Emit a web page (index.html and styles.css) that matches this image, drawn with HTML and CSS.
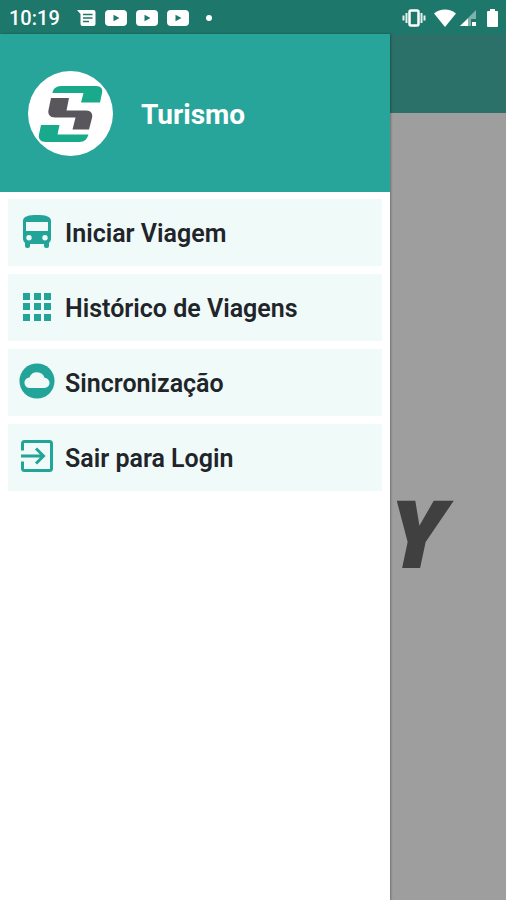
FILE: index.html
```html
<!DOCTYPE html>
<html lang="pt-BR">
<head>
<meta charset="utf-8">
<meta name="viewport" content="width=device-width, initial-scale=1">
<title>Turismo</title>
<link rel="stylesheet" href="styles.css">
</head>
<body>
<header class="status">
  <div class="status-left">
    <time>10:19</time>
    <svg class="note" width="19" height="16" viewBox="0 0 19 16"><path fill="#fff" d="M0 0h16.500a2 2 0 0 1 2 2v12a2 2 0 0 1-2 2h-11a2 2 0 0 1-2-2V4z"/><path stroke="#1d776b" stroke-width="1.500" d="M6 4.500h9.500M6 8h9.500M6 11.500h6"/></svg>
    <svg width="22" height="16" viewBox="0 0 22 16"><rect width="22" height="16" rx="4" fill="#fff"/><path fill="#1d776b" d="M8.500 4.800v6.400l6-3.200z"/></svg>
    <svg width="22" height="16" viewBox="0 0 22 16"><rect width="22" height="16" rx="4" fill="#fff"/><path fill="#1d776b" d="M8.500 4.800v6.400l6-3.200z"/></svg>
    <svg width="22" height="16" viewBox="0 0 22 16"><rect width="22" height="16" rx="4" fill="#fff"/><path fill="#1d776b" d="M8.500 4.800v6.400l6-3.200z"/></svg>
    <span class="dot"></span>
  </div>
  <div class="status-right">
    <svg width="24" height="18" viewBox="0 0 24 18"><rect x="7.500" y="1.500" width="9" height="15" rx="1.500" fill="none" stroke="#fff" stroke-width="2.500"/><path stroke="#e3f1ef" stroke-width="2" d="M4.500 4v10M19.500 4v10M1.500 6.500v5M22.500 6.500v5"/></svg>
    <svg class="wifi" width="22" height="18" viewBox="0 0 22 18"><path fill="#fff" d="M0 4.500C6-1 16-1 22 4.500L11 18z"/></svg>
    <svg width="17" height="18" viewBox="0 0 17 18"><path fill="#7fb2ab" d="M16 1v9h-5v7H0z"/><path fill="#fff" d="M8 9.500V17H0z"/><path fill="#fff" d="M12 13h4v4h-4z"/></svg>
    <svg class="battery" width="11" height="18" viewBox="0 0 11 18"><path fill="#fff" d="M3 0h5v2h2a1 1 0 0 1 1 1v14a1 1 0 0 1-1 1H1a1 1 0 0 1-1-1V3a1 1 0 0 1 1-1h2z"/></svg>
  </div>
</header>
<div class="app">
  <main class="page">
    <div class="appbar"></div>
    <div class="brand">Y</div>
  </main>
  <aside class="drawer">
    <div class="profile">
      <svg class="logo" width="85" height="85" viewBox="0 0 85 85">
        <circle cx="42.500" cy="42.500" r="42.500" fill="#fff"/>
        <path fill="#19a98b" d="M24.500 22C25 18 28 15 33 15H68C73 15 75 18 74 22L72 31.500H53L55.500 22Z"/>
        <path fill="#59575b" d="M23 27H41L38.500 39.500H58C63 39.500 65 43 64 47L61 58.500H44.500L47.500 46.500H27C22 46.500 19.500 43 20.500 39Z"/>
        <path fill="#19a98b" d="M13 54H31.500L29.500 63.500H60.500C59 68 57 71 51 71H18C12.500 71 10 67.500 11 63.500Z"/>
      </svg>
      <h1>Turismo</h1>
    </div>
    <nav class="menu">
      <a href="#iniciar">
        <svg width="38" height="38" viewBox="0 0 38 38"><path fill="currentColor" fill-rule="evenodd" d="M5 9C5 4 11 3 19 3s14 1 14 6v18q0 2-2 4v3q0 2-2 2h-1q-2 0-2-2v-2H12v2q0 2-2 2H9q-2 0-2-2v-3q-2-2-2-4zM8 10v9h22v-9zM11 23a2.700 2.700 0 1 0 0 5.400 2.700 2.700 0 0 0 0-5.400zM27 23a2.700 2.700 0 1 0 0 5.400 2.700 2.700 0 0 0 0-5.400z"/></svg>
        <span>Iniciar Viagem</span>
      </a>
      <a href="#historico">
        <svg width="38" height="38" viewBox="0 0 38 38"><path fill="currentColor" d="M5 6h7v7H5zM16 6h7v7h-7zM26 6h7v7h-7zM5 16h7v7H5zM16 16h7v7h-7zM26 16h7v7h-7zM5 27h7v7H5zM16 27h7v7h-7zM26 27h7v7h-7z"/></svg>
        <span>Histórico de Viagens</span>
      </a>
      <a href="#sincronizacao">
        <svg width="38" height="38" viewBox="0 0 26 26"><circle cx="13" cy="13" r="12" fill="currentColor"/><path fill="#f0faf9" d="M18 17.800H8.200a3.600 3.600 0 0 1-.4-7.200 5.500 5.500 0 0 1 10.400.2 3.500 3.500 0 0 1-.2 7z"/></svg>
        <span>Sincronização</span>
      </a>
      <a href="#sair">
        <svg width="38" height="38" viewBox="0 0 38 38"><path fill="none" stroke="currentColor" stroke-width="3" d="M4.500 13.500V6.500a2 2 0 0 1 2-2h25a2 2 0 0 1 2 2v25a2 2 0 0 1-2 2h-25a2 2 0 0 1-2-2v-7M3 19h22M18 11.500l7.500 7.500-7.500 7.500"/></svg>
        <span>Sair para Login</span>
      </a>
    </nav>
  </aside>
</div>
</body>
</html>
```
FILE: styles.css
```css
* {
  box-sizing: border-box;
}

body {
  margin: 0;
  min-height: 100vh;
  display: flex;
  flex-direction: column;
  font-family: Roboto, "Liberation Sans", sans-serif;
  background: #9e9e9e;
}

svg {
  display: block;
  flex: none;
}

.status {
  height: 34px;
  padding: 2px 8px 0 9px;
  display: flex;
  align-items: center;
  justify-content: space-between;
  background: #1d776b;
  color: #fff;
}

.status-left,
.status-right {
  display: flex;
  align-items: center;
  gap: 9px;
}

.status time {
  margin-right: 8px;
  font-size: 20px;
  font-weight: 500;
  line-height: 24px;
}

.dot {
  width: 6px;
  height: 6px;
  margin-left: 8px;
  border-radius: 50%;
  background: #fff;
}

.status-right {
  gap: 4px;
}

.wifi {
  margin-left: 4px;
}

.battery {
  margin-left: 6px;
}

.app {
  position: relative;
  flex: 1;
  display: flex;
}

.page {
  flex: 1;
  display: flex;
  flex-direction: column;
}

.appbar {
  height: 79px;
  background: #2c7169;
}

.brand {
  flex: 1;
  display: flex;
  align-items: center;
  justify-content: flex-end;
  padding: 50px 60px 0 0;
  color: #404040;
  font-family: "Open Sans", Roboto, sans-serif;
  font-size: 94px;
  font-style: italic;
  font-weight: 800;
  line-height: 96px;
}

.drawer {
  position: absolute;
  top: 0;
  bottom: 0;
  left: 0;
  width: 390px;
  max-width: 85%;
  background: #fff;
  box-shadow: 1px 0 2px rgba(0, 0, 0, 0.3);
}

.profile {
  height: 158px;
  padding: 0 28px;
  display: flex;
  align-items: center;
  gap: 28px;
  background: #27a59a;
  color: #fff;
}

.profile h1 {
  margin: 0;
  padding-top: 3px;
  font-size: 28px;
  font-weight: 700;
  line-height: 32px;
}

.menu {
  display: flex;
  flex-direction: column;
  gap: 8px;
  padding: 7px 8px;
}

.menu a {
  display: flex;
  align-items: center;
  gap: 9px;
  height: 67px;
  padding: 0 10px;
  background: #f0faf9;
  color: #22a498;
  text-decoration: none;
}

.menu svg {
  margin-bottom: 3px;
}

.menu span {
  padding-top: 2px;
  color: #212529;
  font-size: 25px;
  font-weight: 600;
  line-height: 32px;
}
```
